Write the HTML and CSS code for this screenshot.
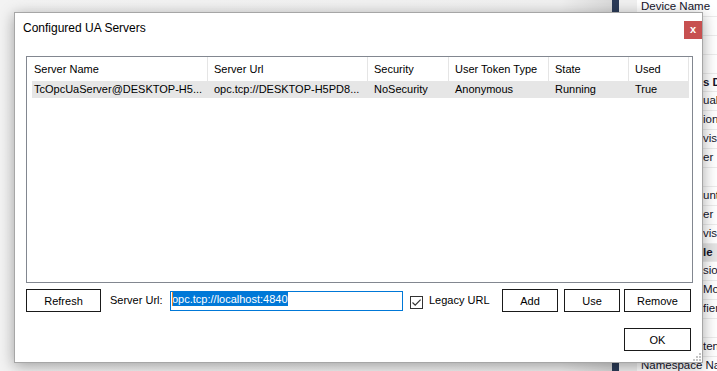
FILE: index.html
```html
<!DOCTYPE html>
<html>
<head>
<meta charset="utf-8">
<title>Configured UA Servers</title>
<link rel="stylesheet" href="styles.css">
</head>
<body>
<div class="desktop">
  <div class="bg-pane"></div>
  <div class="splitter"></div>
  <div class="grid-margin"></div>
  <div class="grid">
    <div class="grow">Device Name</div>
    <div class="grow"></div>
    <div class="grow"></div>
    <div class="grow"></div>
    <div class="grow tail bold">s D</div>
    <div class="grow tail">ual</div>
    <div class="grow tail">ion</div>
    <div class="grow tail">visi</div>
    <div class="grow tail">er</div>
    <div class="grow tail"></div>
    <div class="grow tail">unt</div>
    <div class="grow tail">er</div>
    <div class="grow tail">visio</div>
    <div class="grow tail bold cat">le</div>
    <div class="grow tail">sio</div>
    <div class="grow tail">Mod</div>
    <div class="grow tail">fier</div>
    <div class="grow tail"></div>
    <div class="grow tail">ten</div>
    <div class="grow">Namespace Name</div>
  </div>
</div>

<div class="dialog">
  <div class="titlebar">
    <span class="title">Configured UA Servers</span>
    <span class="close">x</span>
  </div>
  <div class="body">
    <div class="list">
      <div class="header">
        <div class="hcell c1">Server Name</div>
        <div class="hcell c2">Server Url</div>
        <div class="hcell c3">Security</div>
        <div class="hcell c4">User Token Type</div>
        <div class="hcell c5">State</div>
        <div class="hcell c6">Used</div>
      </div>
      <div class="row">
        <div class="cell c1">TcOpcUaServer@DESKTOP-H5...</div>
        <div class="cell c2">opc.tcp://DESKTOP-H5PD8...</div>
        <div class="cell c3">NoSecurity</div>
        <div class="cell c4">Anonymous</div>
        <div class="cell c5">Running</div>
        <div class="cell c6">True</div>
      </div>
    </div>
    <div class="controls">
      <div class="btn refresh">Refresh</div>
      <span class="label">Server Url:</span>
      <div class="input"><span class="sel">opc.tcp://localhost:4840</span></div>
      <span class="check"><svg width="11" height="11" viewBox="0 0 11 11"><path d="M1.5 5.5 L4.2 8.2 L9.6 2.6" fill="none" stroke="#333" stroke-width="1.2"/></svg></span>
      <span class="legacy">Legacy URL</span>
      <div class="btns">
        <div class="btn add">Add</div>
        <div class="btn use">Use</div>
        <div class="btn remove">Remove</div>
      </div>
    </div>
    <div class="okrow">
      <div class="btn ok">OK</div>
    </div>
  </div>
  <svg class="grip" width="8" height="8" viewBox="0 0 8 8">
    <rect x="6" y="0" width="2" height="2" fill="#c4c4c4"/>
    <rect x="3" y="3" width="2" height="2" fill="#c4c4c4"/>
    <rect x="6" y="3" width="2" height="2" fill="#c4c4c4"/>
    <rect x="0" y="6" width="2" height="2" fill="#c4c4c4"/>
    <rect x="3" y="6" width="2" height="2" fill="#c4c4c4"/>
    <rect x="6" y="6" width="2" height="2" fill="#c4c4c4"/>
  </svg>
</div>
</body>
</html>
```

FILE: styles.css
```css
html, body {
  margin: 0;
  padding: 0;
}
body {
  width: 717px;
  height: 371px;
  overflow: hidden;
  position: relative;
  font-family: "Liberation Sans", Arial, sans-serif;
  font-size: 11px;
  color: #000;
  background: #f0f0f0;
}

/* background application */
.desktop {
  display: flex;
  height: 371px;
}
.bg-pane {
  width: 612px;
  background: linear-gradient(to right, #f3f3f3 0, #f0f0f0 560px, #dadada 612px);
}
.splitter {
  width: 7px;
  background: #2b3b58;
}
.grid-margin {
  width: 18px;
  background: #f0f0f0;
}
.grid {
  flex: 1;
  background: #fff;
  margin-top: -2px;
  overflow: hidden;
}
.grow {
  height: 18.9px;
  box-sizing: border-box;
  border-bottom: 1px solid #ececec;
  padding-left: 4px;
  line-height: 17.9px;
  font-size: 11.5px;
  color: #14142a;
  white-space: nowrap;
}
.grow.tail {
  padding-left: 66px;
}
.grow.bold {
  font-weight: bold;
}
.grow.cat {
  background: #e4e4e4;
}

/* dialog window */
.dialog {
  position: absolute;
  left: 14px;
  top: 12px;
  width: 689px;
  height: 351px;
  box-sizing: border-box;
  border: 1px solid #a6a6a6;
  background: #fff;
  box-shadow: 0 3px 14px rgba(0, 0, 0, 0.35);
  display: flex;
  flex-direction: column;
}
.titlebar {
  height: 43px;
  box-sizing: border-box;
  display: flex;
  align-items: flex-start;
  padding-top: 8px;
  padding-left: 8px;
}
.title {
  font-size: 12px;
  line-height: 14px;
}
.close {
  margin-left: auto;
  width: 18px;
  height: 18px;
  background: #c75050;
  color: #fff;
  font-weight: bold;
  font-size: 11px;
  line-height: 17px;
  text-align: center;
}
.body {
  padding: 0 9px 0 11px;
  display: flex;
  flex-direction: column;
}
.list {
  height: 227px;
  box-sizing: border-box;
  border: 1px solid #828790;
  background: #fff;
}
.header {
  display: flex;
  height: 24px;
}
.hcell, .cell {
  box-sizing: border-box;
  padding-left: 6px;
  white-space: nowrap;
  overflow: hidden;
}
.hcell {
  line-height: 24px;
  border-right: 1px solid #e5e5e5;
}
.c1 { width: 181px; padding-left: 7px; }
.c2 { width: 160px; }
.c3 { width: 81px; }
.c4 { width: 100px; }
.c5 { width: 80px; }
.c6 { width: 60px; }
.row {
  display: flex;
  width: 662px;
  height: 17px;
  line-height: 17px;
  background: linear-gradient(to right, transparent 5px, #e6e6e6 5px);
}

.controls {
  display: flex;
  align-items: flex-start;
  margin-top: 6px;
  height: 23px;
  padding-right: 2px;
}
.btn {
  height: 23px;
  box-sizing: border-box;
  border: 1px solid #1a1a1a;
  background: #fff;
  display: flex;
  align-items: center;
  justify-content: center;
}
.refresh { width: 75px; }
.label {
  margin-left: 9px;
  width: 60px;
  line-height: 23px;
}
.input {
  width: 233px;
  height: 20px;
  margin-top: 2px;
  box-sizing: border-box;
  border: 1px solid #0078d7;
  padding-left: 1px;
  display: flex;
  align-items: flex-start;
}
.sel {
  position: relative;
  background: #0078d7;
  color: #fff;
  height: 14px;
  line-height: 14px;
  white-space: nowrap;
}
.sel::before {
  content: "";
  position: absolute;
  left: 0;
  top: 0;
  width: 1px;
  height: 14px;
  background: #e8842a;
}
.check {
  margin-left: 7px;
  margin-top: 7px;
  width: 13px;
  height: 13px;
  box-sizing: border-box;
  border: 1px solid #333;
  background: #fff;
  display: flex;
}
.legacy {
  margin-left: 6px;
  line-height: 23px;
}
.btns {
  margin-left: auto;
  display: flex;
}
.add { width: 56px; }
.use { width: 56px; margin-left: 6px; }
.remove { width: 67px; margin-left: 4px; }
.okrow {
  display: flex;
  justify-content: flex-end;
  margin-top: 16px;
  padding-right: 2px;
}
.ok { width: 67px; }
.grip {
  position: absolute;
  right: 1px;
  bottom: 1px;
}
```
